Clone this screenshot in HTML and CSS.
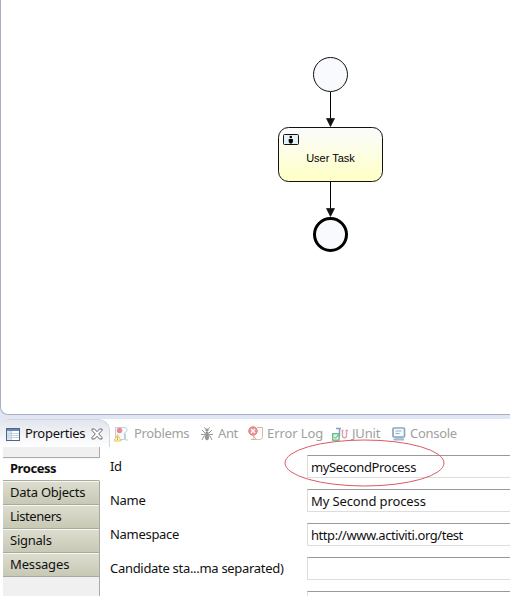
FILE: index.html
```html
<!DOCTYPE html>
<html lang="en">
<head>
<meta charset="utf-8">
<title>Process properties</title>
<link rel="stylesheet" href="styles.css">
</head>
<body>
<main class="workbench">
  <section class="editor">
    <svg class="diagram" width="509" height="414" viewBox="1 0 509 414">
      <defs>
        <linearGradient id="task" x1="0" y1="0" x2="0" y2="1">
          <stop offset="0" stop-color="#fafbfc"/>
          <stop offset=".3" stop-color="#fcfded"/>
          <stop offset="1" stop-color="#ffffc4"/>
        </linearGradient>
      </defs>
      <circle cx="330.5" cy="74.5" r="17" fill="#f9fafd" stroke="#111"/>
      <path d="M330.5 92v28M330.5 182v28" stroke="#000" fill="none"/>
      <path d="M326.5 118.5h8l-4 8zM326.5 208.5h8l-4 8z" fill="#111" stroke="#111" stroke-width=".7"/>
      <rect x="278.5" y="127.500" width="104" height="54" rx="10" fill="url(#task)" stroke="#111"/>
      <rect x="283.500" y="134.500" width="15" height="10" rx="1" fill="#e4f2f8" stroke="#111"/>
      <circle cx="290.800" cy="137" r="1.300"/>
      <path d="M288.700 139h4.200v2.700l-1 1.800h-2.200l-1-1.800z"/>
      <text class="task-label" x="330.500" y="162" text-anchor="middle">User Task</text>
      <circle cx="330.500" cy="234.500" r="16" fill="#f9fafd" stroke="#000" stroke-width="3"/>
    </svg>
  </section>

  <section class="view">
    <nav class="tabs">
      <div class="tab tab-active">
        <svg class="icon" width="14" height="13" viewBox="0 0 14 13">
          <rect x=".5" y=".5" width="13" height="12" fill="#fff" stroke="#526486"/>
          <path d="M1 1h12v2H1z" fill="#6688b5"/>
          <path d="M1 3h4v9H1z" fill="#dce6f3"/>
          <path d="M5.500 3v9M1 5.500h12M1 7.500h12M1 9.500h12" stroke="#c3cfdf" fill="none"/>
        </svg>
        <span class="t-properties">Properties</span>
        <svg class="close" width="12" height="12" viewBox="0 0 12 12">
          <path d="M1 1h2.500L6 3.700 8.500 1H11v1.500L7.700 6 11 9.500V11H8.500L6 8.300 3.500 11H1V9.500L4.300 6 1 2.500z" fill="#fff" stroke="#555" stroke-width=".9"/>
        </svg>
      </div>
      <div class="tab tab-problems">
        <svg class="icon" width="15" height="16" viewBox="0 0 15 16">
          <path d="M1.500 1.500h9c4 0 3 5 0 5.500v6.500h-9z" fill="#f7fafc" stroke="#b9d2df"/>
          <path d="M10 8h1.500v6H14" stroke="#b9d2df" fill="none"/>
          <circle cx="5.500" cy="4.500" r="2.700" fill="#ef8790"/>
          <path d="M3.500 8.500l3.700 6.500H0z" fill="#fff2bd" stroke="#edc36b"/>
          <path d="M3.500 10.500v2M3.500 13v1" stroke="#cf9b48" fill="none"/>
        </svg>
        <span>Problems</span>
      </div>
      <div class="tab tab-ant">
        <svg class="icon" width="12" height="14" viewBox="0 0 12 14">
          <path d="M3.500.5l1.500 2M8.500.5L7 2.500M1 3l3 3h4l3-3M0 7.500h12M1 13l2-4h6l2 4" fill="none" stroke="#969696"/>
          <ellipse cx="6" cy="3" rx="1.700" ry="1.500" fill="#969696"/>
          <ellipse cx="6" cy="6.500" rx="1.400" ry="2" fill="#969696"/>
          <ellipse cx="6" cy="10.500" rx="2" ry="2.800" fill="#969696"/>
        </svg>
        <span>Ant</span>
      </div>
      <div class="tab tab-error">
        <svg class="icon" width="16" height="15" viewBox="0 0 16 15">
          <path d="M9 1.500h5.500V10c0 4-3 3.500-5 3.500H3c3 0 3-2 3-4" fill="#fff" stroke="#c9bda4"/>
          <circle cx="5" cy="5" r="4.300" fill="#ee9191" stroke="#df8585"/>
          <path d="M3 3l4 4M7 3L3 7" stroke="#fff" stroke-width="1.300"/>
          <path d="M5 9.500l3 3.500" stroke="#e6a2a2"/>
        </svg>
        <span>Error Log</span>
      </div>
      <div class="tab tab-junit">
        <svg class="icon" width="16" height="14" viewBox="0 0 16 14">
          <path d="M4 1.500h5M7.500 1v7c0 2-1 2.500-2.500 2" fill="none" stroke="#8b9ccc" stroke-width="1.500"/>
          <path d="M10.500 3.500v5c0 3 4 3 4 0v-5M9.500 3.500h2M13.500 3.500H16" fill="none" stroke="#d9a0a9" stroke-width="1.300"/>
          <rect x=".7" y="6.700" width="6.300" height="6.500" fill="#e3f6ea" stroke="#63ba88" stroke-width="1.300"/>
          <path d="M2 9.700l1.500 1.600L6 8" fill="none" stroke="#57ad7c"/>
        </svg>
        <span>JUnit</span>
      </div>
      <div class="tab tab-console">
        <svg class="icon" width="14" height="14" viewBox="0 0 14 14">
          <rect x="1" y="1" width="11.500" height="9" rx="1" fill="#f5fafe" stroke="#88a8c5" stroke-width="1.700"/>
          <path d="M3.500 4h6M3.500 6.500h4" stroke="#9aadc0"/>
          <path d="M4 10.500h6l2 2.500H1.500z" fill="#b6c9db" stroke="#8da9c2" stroke-width=".8"/>
        </svg>
        <span>Console</span>
      </div>
    </nav>

    <div class="content">
      <aside class="categories">
        <div class="category-top"></div>
        <div class="category selected">Process</div>
        <div class="category c-data">Data Objects</div>
        <div class="category c-listeners">Listeners</div>
        <div class="category">Signals</div>
        <div class="category c-messages">Messages</div>
        <div class="category-rest"></div>
      </aside>
      <div class="form">
        <div class="row"><span class="label">Id</span><div class="field"><span class="v-id">mySecondProcess</span></div></div>
        <div class="row"><span class="label">Name</span><div class="field"><span class="v-name">My Second process</span></div></div>
        <div class="row"><span class="label">Namespace</span><div class="field"><span class="v-url">http://www.activiti.org/test</span></div></div>
        <div class="row"><span class="label">Candidate sta...ma separated)</span><div class="field"></div></div>
        <div class="row"><span class="label"></span><div class="field"></div></div>
        <svg class="annotation" width="162" height="50" viewBox="0 0 162 50">
          <ellipse cx="80.500" cy="24" rx="79.500" ry="23" fill="none" stroke="#d95b65"/>
        </svg>
      </div>
    </div>
  </section>
</main>
</body>
</html>
```
FILE: styles.css
```css
* { box-sizing: border-box; }
body {
  margin: 0;
  overflow: hidden;
  font: 13px/18px "Noto Sans", "Open Sans", sans-serif;
  color: #111;
}
.workbench {
  height: 596px;
  display: flex;
  flex-direction: column;
  background: #e0e6f4;
}
.editor {
  height: 415px;
  flex: none;
  background: #fff;
  border: solid #a9adc2;
  border-width: 0 0 1px 1px;
  border-radius: 0 0 0 8px;
}
.diagram { display: block; }
.task-label { font: 11px "Liberation Sans", sans-serif; }
.view {
  margin-top: 4px;
  height: 177px;
  background: #fff;
  border-radius: 8px 0 0 0;
  overflow: hidden;
}
.tabs { display: flex; height: 28px; color: #a0a0a0; }
.tab { display: flex; align-items: center; flex: none; padding-top: 1px; white-space: nowrap; }
.tab svg { flex: none; }
.tab span { margin-top: -2px; }
.tab-active {
  width: 110px;
  padding-left: 6px;
  color: #111;
  background: linear-gradient(#e2e5ed, #fff);
  border: 1px solid #d2d6e1;
  border-width: 1px 1px 0 0;
  border-radius: 8px 12px 0 0;
}
.tab-active .icon { margin-right: 5px; }
.t-properties { width: 66px; letter-spacing: -.3px; }
.tab-problems { width: 91px; padding-left: 4px; letter-spacing: -.35px; }
.tab-problems .icon { margin-right: 5px; }
.tab-ant { width: 47px; letter-spacing: -.4px; }
.tab-ant .icon { margin-right: 5px; }
.tab-error { width: 84px; letter-spacing: -.1px; }
.tab-error .icon { margin-right: 3px; }
.tab-junit { width: 60px; letter-spacing: -.2px; }
.tab-junit .icon { margin-right: 4px; }
.tab-console { letter-spacing: -.3px; }
.tab-console .icon { margin-right: 4px; }
.content { display: flex; height: 149px; }
.categories { width: 97px; margin-left: 3px; flex: none; letter-spacing: -.25px; }
.category-top {
  height: 11px;
  background: #f0f0f0;
  border: solid #aaa;
  border-width: 0 1px 1px 0;
}
.category {
  height: 24px;
  padding: 2px 0 0 7px;
  background: linear-gradient(#deded0, #c8c8b5);
  border: solid #aaa99f;
  border-width: 0 1px 1px 0;
  box-shadow: inset 0 1px #f7f7f2;
  white-space: nowrap;
}
.selected {
  height: 23px;
  padding-top: 1px;
  background: #fff;
  border-color: #fff #fff #aaa99f;
  font-weight: bold;
  letter-spacing: -.45px;
}
.c-listeners { letter-spacing: -.45px; }
.c-messages { letter-spacing: -.15px; }
.category-rest { height: 19px; background: #f0f0f0; border-right: 1px solid #aaa; }
.form { position: relative; flex: 1; padding: 8px 0 0 10px; }
.row { height: 34px; display: flex; }
.label { width: 197px; padding-top: 2px; flex: none; white-space: nowrap; letter-spacing: -.3px; }
.field {
  flex: 1;
  height: 23px;
  padding: 2px 0 0 3px;
  border: solid #ddd;
  border-width: 1px 0 1px 1px;
  border-top-color: #999;
  white-space: nowrap;
}
.v-id { letter-spacing: -.35px; }
.v-name { letter-spacing: -.12px; }
.v-url { letter-spacing: -.44px; }
.annotation { position: absolute; left: 184px; top: -8px; }
```
